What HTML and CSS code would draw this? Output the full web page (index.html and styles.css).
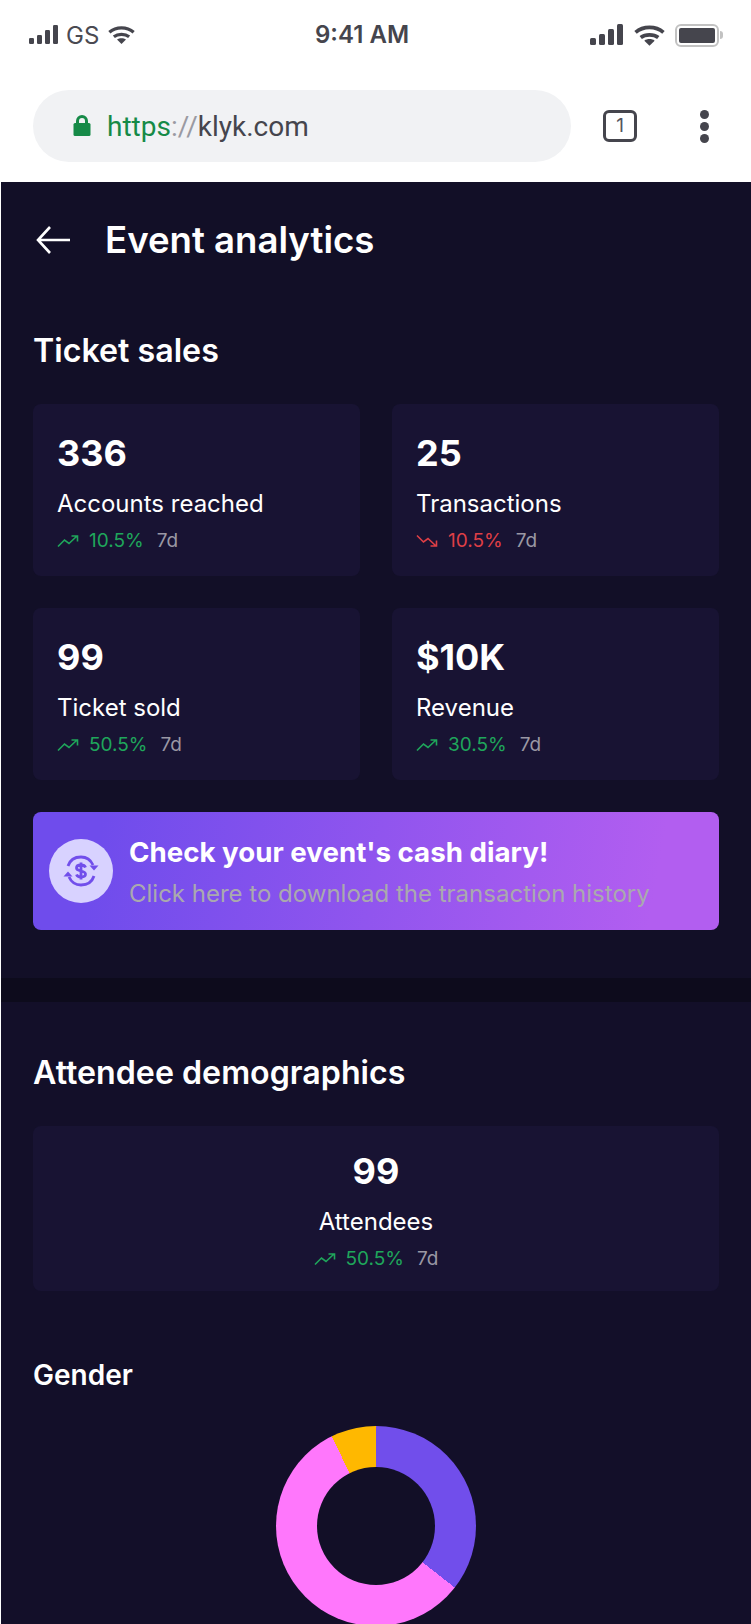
FILE: index.html
```html
<!DOCTYPE html>
<html lang="en">

<head>
  <meta charset="UTF-8" />
  <meta name="viewport" content="width=device-width, initial-scale=1.0" />
  <title>Event analytics</title>
  <link rel="stylesheet" href="styles.css">
</head>

<body>
  <div class="statusbar">
    <div class="status-side">
      <svg class="icon-signal" width="30" height="20" viewBox="0 0 30 20">
        <rect x="0" y="13" width="5" height="6" rx="1.2" />
        <rect x="8" y="10" width="5" height="9" rx="1.2" />
        <rect x="16" y="5" width="5" height="14" rx="1.2" />
        <rect x="24" y="0" width="5" height="19" rx="1.2" />
      </svg>
      <span class="carrier">GS</span>
      <svg class="icon-wifi" width="27" height="18" viewBox="0 0 30 20">
        <path d="M1.500 7C9 .5 21 .5 28.500 7" />
        <path d="M6.500 12C11 8.500 19 8.500 23.500 12" />
        <path class="wifi-dot" d="M15 20l-5-5c2.800-2 7.200-2 10 0z" />
      </svg>
    </div>
    <div class="clock">9:41 AM</div>
    <div class="status-side">
      <svg class="icon-signal" width="34" height="22" viewBox="0 0 34 22">
        <rect x="0" y="14" width="6" height="7" rx="1.5" />
        <rect x="9" y="10" width="6" height="11" rx="1.5" />
        <rect x="18" y="5" width="6" height="16" rx="1.5" />
        <rect x="27" y="0" width="6" height="21" rx="1.5" />
      </svg>
      <svg class="icon-wifi icon-wifi-right" width="31" height="21" viewBox="0 0 30 20">
        <path d="M1.500 7C9 .5 21 .5 28.500 7" />
        <path d="M6.500 12C11 8.500 19 8.500 23.500 12" />
        <path class="wifi-dot" d="M15 20l-5-5c2.800-2 7.200-2 10 0z" />
      </svg>
      <div class="battery"><div class="battery-fill"></div></div>
      <div class="battery-nub"></div>
    </div>
  </div>

  <div class="toolbar">
    <div class="urlbar">
      <svg width="18" height="22" viewBox="0 0 18 22" class="icon-lock">
        <path d="M4.500 8V6a4.500 4.500 0 0 1 9 0v2" />
        <rect x="0.500" y="8" width="17" height="13" rx="1.500" />
      </svg>
      <span class="url"><span class="url-scheme">https</span><span class="url-sep">://</span>klyk.com</span>
    </div>
    <div class="tab-count">1</div>
    <div class="menu-dots"><i></i><i></i><i></i></div>
  </div>

  <div class="app">
    <div class="app-header">
      <svg width="36" height="28" viewBox="0 0 36 28" class="icon-back">
        <path d="M35 14H3M15 1L3 14l12 13" />
      </svg>
      <h1>Event analytics</h1>
    </div>

    <section class="section section-sales">
      <h2>Ticket sales</h2>
      <div class="stat-grid">
        <div class="stat-card">
          <div class="stat-value">336</div>
          <div class="stat-label">Accounts reached</div>
          <div class="stat-change up">
            <svg width="22" height="14" viewBox="0 0 22 14"><path d="M1 12.500l6.500-6.500 4.500 3.500 8-7.500M14.500 2h6v5.500" /></svg>
            <span>10.5%</span><span class="period">7d</span>
          </div>
        </div>
        <div class="stat-card">
          <div class="stat-value">25</div>
          <div class="stat-label">Transactions</div>
          <div class="stat-change down">
            <svg width="22" height="14" viewBox="0 0 22 14"><path d="M1 1.500L7.500 8l4.500-3.500 8 7.500M14.500 12h6V6.500" /></svg>
            <span>10.5%</span><span class="period">7d</span>
          </div>
        </div>
        <div class="stat-card">
          <div class="stat-value">99</div>
          <div class="stat-label">Ticket sold</div>
          <div class="stat-change up">
            <svg width="22" height="14" viewBox="0 0 22 14"><path d="M1 12.500l6.500-6.500 4.500 3.500 8-7.500M14.500 2h6v5.500" /></svg>
            <span>50.5%</span><span class="period">7d</span>
          </div>
        </div>
        <div class="stat-card">
          <div class="stat-value">$10K</div>
          <div class="stat-label">Revenue</div>
          <div class="stat-change up">
            <svg width="22" height="14" viewBox="0 0 22 14"><path d="M1 12.500l6.500-6.500 4.500 3.500 8-7.500M14.500 2h6v5.500" /></svg>
            <span>30.5%</span><span class="period">7d</span>
          </div>
        </div>
      </div>

      <div class="banner">
        <div class="banner-icon">
          <svg width="36" height="32" viewBox="0 0 36 32">
            <path d="M5 11C7 5 12 2 18 2c5 0 9.500 2.500 12 8" />
            <path d="M31 21c-2 6-7 9-13 9-5 0-9.500-2.500-12-8" />
            <path class="arrow-head" d="M26.500 10.500h9l-4.500 5z" />
            <path class="arrow-head" d="M9.500 21.500h-9l4.500-5z" />
            <path class="dollar" d="M22.500 12.500c-.5-1.500-2-2.500-4.500-2.500-3 0-4.500 1.300-4.500 3 0 4 9 2 9 6 0 1.700-1.500 3-4.500 3-2.500 0-4-1-4.500-2.500M18 7.500v17" />
          </svg>
        </div>
        <div class="banner-text">
          <div class="banner-title">Check your event's cash diary!</div>
          <div class="banner-sub">Click here to download the transaction history</div>
        </div>
      </div>
    </section>

    <div class="divider"></div>

    <section class="section section-demo">
      <h2>Attendee demographics</h2>
      <div class="stat-card stat-card-center">
        <div class="stat-value">99</div>
        <div class="stat-label">Attendees</div>
        <div class="stat-change up">
          <svg width="22" height="14" viewBox="0 0 22 14"><path d="M1 12.500l6.500-6.500 4.500 3.500 8-7.500M14.500 2h6v5.500" /></svg>
          <span>50.5%</span><span class="period">7d</span>
        </div>
      </div>
      <h3>Gender</h3>
      <div class="donut"></div>
    </section>
  </div>
</body>

</html>
```

FILE: styles.css
```css
html,
body {
  height: 1624px;
  overflow: hidden;
}

body {
  margin: 0;
  background-color: #fff;
  font-family: Inter, "Noto Sans", sans-serif;
  color: #fff;
}

.statusbar {
  height: 72px;
  box-sizing: border-box;
  padding: 24px 28px 0 29px;
  display: flex;
  justify-content: space-between;
  align-items: flex-start;
  position: relative;
}

.status-side {
  display: flex;
  align-items: center;
  height: 22px;
}

.icon-signal {
  fill: #45454d;
}

.icon-wifi path {
  fill: none;
  stroke: #45454d;
  stroke-width: 3.6;
}

.icon-wifi .wifi-dot {
  fill: #45454d;
  stroke: none;
}

.icon-wifi-right {
  margin-left: 10px;
}

.carrier {
  margin: 0 9px 0 7px;
  font-size: 24px;
  color: #4a4a52;
}

.clock {
  position: absolute;
  left: 315px;
  top: 21px;
  font-size: 24px;
  font-weight: 600;
  line-height: 28px;
  color: #45454d;
}

.battery {
  margin-left: 10px;
  width: 44px;
  height: 23px;
  box-sizing: border-box;
  padding: 2px;
  border: 2px solid #c2c2c2;
  border-radius: 6px;
}

.battery-fill {
  height: 100%;
  background-color: #45454d;
  border-radius: 2px;
}

.battery-nub {
  margin-left: 1px;
  width: 3px;
  height: 8px;
  background-color: #c2c2c2;
  border-radius: 0 3px 3px 0;
}

.toolbar {
  height: 110px;
  box-sizing: border-box;
  padding: 18px 0 0 33px;
  display: flex;
  align-items: flex-start;
}

.urlbar {
  width: 538px;
  height: 72px;
  box-sizing: border-box;
  padding-left: 40px;
  background-color: #f1f2f4;
  border-radius: 36px;
  display: flex;
  align-items: center;
}

.icon-lock {
  margin-top: -1px;
}

.icon-lock path {
  fill: none;
  stroke: #168a47;
  stroke-width: 3;
}

.icon-lock rect {
  fill: #168a47;
}

.url {
  margin-left: 16px;
  font-family: Roboto, sans-serif;
  font-size: 28px;
  color: #45454d;
}

.url-scheme {
  color: #168a47;
}

.url-sep {
  color: #9a9aa2;
}

.tab-count {
  margin: 20px 0 0 32px;
  width: 34px;
  height: 32px;
  box-sizing: border-box;
  border: 3px solid #45454d;
  border-radius: 6px;
  font-size: 19px;
  line-height: 26px;
  text-align: center;
  color: #55555f;
}

.menu-dots {
  margin: 20px 0 0 63px;
  display: flex;
  flex-direction: column;
  gap: 3px;
}

.menu-dots i {
  width: 9px;
  height: 9px;
  border-radius: 50%;
  background-color: #45454d;
}

.app {
  margin-left: 1px;
  background-color: #120f27;
  height: 1442px;
}

.app-header {
  height: 120px;
  box-sizing: border-box;
  padding: 0 0 5px 34px;
  display: flex;
  align-items: center;
  gap: 34px;
}

.icon-back path {
  fill: none;
  stroke: #fff;
  stroke-width: 2.6;
}

h1 {
  margin: 0;
  font-size: 36.6px;
  font-weight: 600;
}

.section {
  padding: 0 32px;
}

.section-sales {
  padding-bottom: 48px;
}

.section-demo {
  padding-top: 22px;
  background-color: #130f29;
}

h2 {
  margin: 0 0 35px;
  padding-top: 31px;
  font-size: 32.2px;
  font-weight: 600;
  line-height: 36px;
}

.stat-grid {
  display: grid;
  grid-template-columns: 1fr 1fr;
  gap: 32px;
}

.stat-card {
  height: 172px;
  box-sizing: border-box;
  padding: 27px 24px 0;
  background-color: #181333;
  border-radius: 8px;
}

.stat-value {
  font-size: 36px;
  font-weight: 700;
  line-height: 44px;
}

.stat-label {
  margin-top: 14px;
  font-size: 24px;
  line-height: 30px;
}

.stat-change {
  margin-top: 10px;
  display: flex;
  align-items: center;
  font-size: 19px;
  line-height: 24px;
}

.stat-change svg {
  margin-right: 10px;
}

.stat-change svg path {
  fill: none;
  stroke: currentColor;
  stroke-width: 1.6;
}

.up {
  color: #1fa65b;
}

.down {
  color: #df3f46;
}

.period {
  margin-left: 13px;
  color: #9a98a4;
}

.stat-card-center {
  height: 165px;
  padding-top: 23px;
  text-align: center;
}

.stat-card-center .stat-change {
  justify-content: center;
}

.banner {
  margin-top: 32px;
  height: 118px;
  box-sizing: border-box;
  padding: 0 16px;
  display: flex;
  align-items: center;
  gap: 16px;
  border-radius: 8px;
  background: linear-gradient(100deg, #6f4cec 10%, #b25ef0 90%);
}

.banner-icon {
  width: 64px;
  height: 64px;
  flex-shrink: 0;
  border-radius: 50%;
  background-color: #d8d2ff;
  display: flex;
  align-items: center;
  justify-content: center;
}

.banner-icon path {
  fill: none;
  stroke: #714eeb;
  stroke-width: 2.8;
}

.banner-icon .arrow-head {
  fill: #714eeb;
  stroke: none;
}

.banner-text {
  padding-top: 2px;
}

.banner-title {
  font-size: 27.7px;
  font-weight: 700;
  line-height: 34px;
}

.banner-sub {
  margin-top: 10px;
  font-size: 24px;
  line-height: 30px;
  color: #aaa9ae;
}

.divider {
  height: 24px;
  background-color: #0d0b1c;
}

h3 {
  margin: 68px 0 0;
  font-size: 28px;
  font-weight: 600;
  line-height: 32px;
}

.donut {
  margin: 35px auto 0;
  width: 200px;
  height: 200px;
  border-radius: 50%;
  background: conic-gradient(#714eeb 0 128deg, #ff77fc 128deg 333.6deg, #ffb800 333.6deg 360deg);
  position: relative;
}

.donut::after {
  content: "";
  position: absolute;
  inset: 41px;
  border-radius: 50%;
  background-color: #120f27;
}
```
